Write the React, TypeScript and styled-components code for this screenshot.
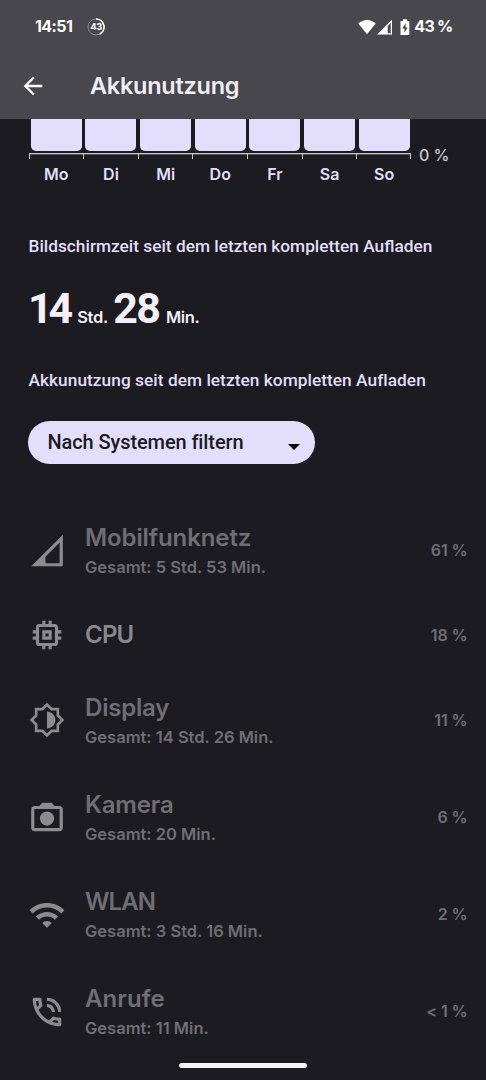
import React from 'react';
import styled, { createGlobalStyle } from 'styled-components';
import { MdArrowBack, MdMemory, MdOutlinePhoneInTalk, MdWifi } from 'react-icons/md';

const GlobalStyle = createGlobalStyle`
  * { box-sizing: border-box; }
  body {
    margin: 0;
    background: #1c1b20;
    font-family: Inter, "Liberation Sans", sans-serif;
    -webkit-font-smoothing: antialiased;
  }
`;

const Screen = styled.div`
  width: 486px;
  height: 1080px;
  display: flex;
  flex-direction: column;
  overflow: hidden;
  background: #1c1b20;
`;

const Header = styled.header`
  height: 119px;
  flex: none;
  background: #48474c;
  color: #fff;
`;

const StatusBar = styled.div`
  height: 53px;
  padding: 0 33.5px 0 35px;
  display: flex;
  align-items: center;
  justify-content: space-between;
`;

const StatusGroup = styled.div`
  display: flex;
  align-items: center;
  svg { display: block; flex: none; }
`;

const Label = styled.span<{ $size: number; $weight?: number; $spacing?: number; $color?: string; $narrow?: boolean }>`
  font-family: ${p => (p.$narrow ? 'Roboto, "Liberation Sans", sans-serif' : 'inherit')};
  font-size: ${p => p.$size}px;
  font-weight: ${p => p.$weight ?? 600};
  letter-spacing: ${p => p.$spacing ?? 0}px;
  color: ${p => p.$color ?? 'inherit'};
  line-height: 1.2;
  white-space: nowrap;
`;

const RingBadge = styled.div`
  position: relative;
  width: 18px;
  height: 18px;
  margin-left: 15px;
  display: flex;
  align-items: center;
  justify-content: center;
  svg { position: absolute; inset: 0; }
`;

const AppBar = styled.div`
  height: 66px;
  padding-left: 19px;
  display: flex;
  align-items: center;
  svg { flex: none; margin-right: 43px; }
`;

const Chart = styled.section`
  display: flex;
  height: 71px;
  padding-left: 28.5px;
  flex: none;
`;

const Days = styled.div`
  display: flex;
  width: 382.5px;
`;

const Day = styled.div`
  flex: 1;
  display: flex;
  flex-direction: column;
  align-items: center;
  padding-left: 1px;
`;

const Bar = styled.div`
  width: 51px;
  height: 32px;
  margin-bottom: 2px;
  border-radius: 0 0 5px 5px;
  background: #e2defc;
`;

const Axis = styled.div<{ $last: boolean }>`
  align-self: stretch;
  height: 6px;
  margin: 0 0 6px -1px;
  border: 0 solid #c9c6c4;
  border-top-width: 1px;
  border-left-width: 1px;
  border-right-width: ${p => (p.$last ? 1 : 0)}px;
  box-shadow: inset 0 1px 0 #55545a;
`;

const Scale = styled.div`
  padding: 26px 0 0 8px;
`;

const SectionTitle = styled.h2<{ $top: number; $spacing: number }>`
  margin: ${p => p.$top}px 0 0 28.5px;
  font-family: Roboto, "Liberation Sans", sans-serif;
  font-size: 17.3px;
  line-height: 20px;
  font-weight: 500;
  letter-spacing: ${p => p.$spacing}px;
  color: #e2defc;
  white-space: nowrap;
`;

const Duration = styled.div`
  display: flex;
  align-items: baseline;
  height: 51px;
  margin: 27px 0 0 28px;
  color: #f3f0f7;
`;

const Gap = styled.i<{ $w: number }>`
  width: ${p => p.$w}px;
`;

const FilterButton = styled.button`
  width: 287px;
  height: 43px;
  flex: none;
  margin: 31px 0 0 28px;
  padding: 0 15px 1px 19.5px;
  border: 0;
  border-radius: 22px;
  background: #e2defc;
  color: #1b1a20;
  font-family: inherit;
  display: flex;
  align-items: center;
  justify-content: space-between;
  svg { margin-top: 9px; }
`;

const List = styled.ul`
  margin: 38px 0 0;
  padding: 0;
  list-style: none;
`;

const Row = styled.li<{ $compact: boolean }>`
  height: ${p => (p.$compact ? 72.4 : 97.2)}px;
  padding: 0 18.5px 0 28px;
  display: flex;
  align-items: center;
  color: #6f6e73;
  > svg { flex: none; color: #8c8b8e; }
`;

const RowText = styled.div`
  flex: 1;
  margin-left: 19px;
  padding-top: 1px;
  display: flex;
  flex-direction: column;
  gap: 5.5px;
`;

const NavHandle = styled.div`
  position: absolute;
  left: 179px;
  top: 1063px;
  width: 128px;
  height: 5px;
  border-radius: 3px;
  background: #f4f4f5;
`;

const SignalIcon = () => (
  <svg width="38" height="38" viewBox="0 0 24 24" fill="currentColor">
    <path fillRule="evenodd" d="M2 21.7 22 1.7v20zM11 19.7h9V6.6l-9 9z" />
  </svg>
);

const BrightnessIcon = () => (
  <svg width="38" height="38" viewBox="0 0 24 24" fill="currentColor">
    <path fillRule="evenodd" d="M19.7 15.2 22.9 12 19.7 8.8V4.3h-4.5L12 1.1 8.8 4.3H4.3v4.5L1.1 12 4.3 15.2V19.7h4.5L12 22.9 15.2 19.7h4.5zM18 14.48V18h-3.52L12 20.48 9.52 18H6v-3.52L3.52 12 6 9.52V6h3.52L12 3.52 14.48 6H18v3.52L20.48 12z" />
    <path d="M12 6.7v10.6c2.93 0 5.3-2.37 5.3-5.3S14.93 6.7 12 6.7z" />
  </svg>
);

const CameraIcon = () => (
  <svg width="38" height="38" viewBox="0 0 24 24" fill="currentColor">
    <path fillRule="evenodd" d="M20 5h-3.17L15 3H9L7.17 5H4c-1.1 0-2 .9-2 2v12c0 1.1.9 2 2 2h16c1.1 0 2-.9 2-2V7c0-1.1-.9-2-2-2zM20 19H4V7h16z" />
    <circle cx="12" cy="13" r="4.5" />
  </svg>
);

type Item = { name: string; total?: string; share: string; icon: React.ReactNode; spacing: number };

const items: Item[] = [
  { name: 'Mobilfunknetz', total: 'Gesamt: 5 Std. 53 Min.', share: '61 %', icon: <SignalIcon />, spacing: -0.1 },
  { name: 'CPU', share: '18 %', icon: <MdMemory size={38} />, spacing: -0.8 },
  { name: 'Display', total: 'Gesamt: 14 Std. 26 Min.', share: '11 %', icon: <BrightnessIcon />, spacing: -0.2 },
  { name: 'Kamera', total: 'Gesamt: 20 Min.', share: '6 %', icon: <CameraIcon />, spacing: -0.15 },
  { name: 'WLAN', total: 'Gesamt: 3 Std. 16 Min.', share: '2 %', icon: <MdWifi size={38} />, spacing: -0.9 },
  { name: 'Anrufe', total: 'Gesamt: 11 Min.', share: '< 1 %', icon: <MdOutlinePhoneInTalk size={38} />, spacing: 0.1 },
];

const days = ['Mo', 'Di', 'Mi', 'Do', 'Fr', 'Sa', 'So'];

export default function App() {
  return (
    <Screen>
      <GlobalStyle />
      <Header>
        <StatusBar>
          <StatusGroup>
            <Label $size={16} $weight={700} $spacing={-0.6}>14:51</Label>
            <RingBadge>
              <svg width="18" height="18" viewBox="0 0 18 18" fill="none">
                <circle cx="9" cy="9" r="8" stroke="#8d8c90" />
                <path d="M9 1a8 8 0 0 1 3.5 15.2" stroke="#fff" strokeWidth="1.6" />
              </svg>
              <Label $size={9.5} $weight={700} $spacing={-0.4}>43</Label>
            </RingBadge>
          </StatusGroup>
          <StatusGroup>
            <svg width="52" height="16" viewBox="0 0 52 16" fill="#fff">
              <path d="M.3 4.6C5.2-.1 12.8-.1 17.7 4.6L9 15.2z" />
              <path fillRule="evenodd" d="M19 15.5 34 .8v14.7zM29.7 14.2h3V4.1l-3 3z" />
              <path d="M45 .3h4v1.6h2.3v14.1h-8.8V1.9H45z" />
              <path d="M47.6 4.2 44.2 9.6h2.2v4l3.3-5.2h-2.1z" fill="#48474c" />
            </svg>
            <Gap $w={4.3} />
            <Label $size={16} $weight={700} $spacing={-0.6}>43</Label>
            <Gap $w={2.8} />
            <Label $size={16} $weight={700} $spacing={-0.8}>%</Label>
          </StatusGroup>
        </StatusBar>
        <AppBar>
          <MdArrowBack size={28} />
          <Label $size={23.5} $spacing={-0.25} $color="#f1edf6">Akkunutzung</Label>
        </AppBar>
      </Header>

      <Chart>
        <Days>
          {days.map((d, i) => (
            <Day key={d}>
              <Bar />
              <Axis $last={i === 6} />
              <Label $size={16} $color="#e2defc">{d}</Label>
            </Day>
          ))}
        </Days>
        <Scale><Label $size={16} $weight={500} $color="#c9c6cc">0 %</Label></Scale>
      </Chart>

      <SectionTitle $top={46} $spacing={0}>Bildschirmzeit seit dem letzten kompletten Aufladen</SectionTitle>
      <Duration>
        <Label $size={43} $weight={700} $spacing={-4.2} $narrow>14</Label>
        <Gap $w={8.2} />
        <Label $size={16.5} $spacing={-0.3}>Std.</Label>
        <Gap $w={5.3} />
        <Label $size={43} $weight={700} $spacing={-1.5} $narrow>28</Label>
        <Gap $w={6.5} />
        <Label $size={16.5} $spacing={-0.4}>Min.</Label>
      </Duration>
      <SectionTitle $top={36} $spacing={0.04}>Akkunutzung seit dem letzten kompletten Aufladen</SectionTitle>

      <FilterButton>
        <Label $size={20} $weight={500} $spacing={-0.1} $narrow>Nach Systemen filtern</Label>
        <svg width="12" height="6" viewBox="0 0 12 6"><path d="M0 0h12L6 6z" fill="#000" /></svg>
      </FilterButton>

      <List>
        {items.map(it => (
          <Row key={it.name} $compact={!it.total}>
            {it.icon}
            <RowText>
              <Label $size={24} $spacing={it.spacing} $color={it.total ? undefined : '#89888c'}>{it.name}</Label>
              {it.total && <Label $size={16.5}>{it.total}</Label>}
            </RowText>
            <Label $size={16} $spacing={-0.1}>{it.share}</Label>
          </Row>
        ))}
      </List>
      <NavHandle />
    </Screen>
  );
}
